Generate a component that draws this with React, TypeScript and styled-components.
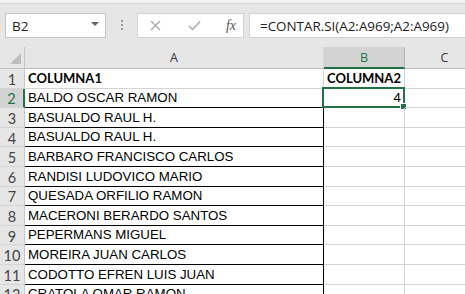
import React from "react";
import styled, { createGlobalStyle } from "styled-components";

const Global = createGlobalStyle`
  html, body { margin: 0; padding: 0; background: #ffffff; }
  body { width: 465px; height: 294px; overflow: hidden; }
  #root { width: 465px; height: 294px; }
`;

const Page = styled.div`
  width: 465px;
  height: 294px;
  display: flex;
  flex-direction: column;
  overflow: hidden;
  background: #e6e6e6;
`;

const TopStrip = styled.div`
  height: 3px;
  background: #f3f3f3;
  border-bottom: 1px solid #d4d4d4;
  flex: none;
`;

const Toolbar = styled.div`
  height: 43px;
  flex: none;
  display: flex;
  align-items: flex-start;
  padding: 9px 0 0 5px;
  box-sizing: border-box;
  background: #e6e6e6;
`;

const NameBox = styled.div`
  width: 101px;
  height: 25px;
  box-sizing: border-box;
  background: #ffffff;
  border: 1px solid #c6c6c6;
  display: flex;
  align-items: center;
  justify-content: space-between;
  padding: 0 6px 0 6px;
  font-family: "Open Sans", "Noto Sans", sans-serif;
  font-size: 13.5px;
  color: #222;
`;

const DropArrow = styled.span`
  width: 0;
  height: 0;
  border-left: 4px solid transparent;
  border-right: 4px solid transparent;
  border-top: 4px solid #666;
  margin-top: -3px;
`;

const Grip = styled.div`
  width: 2px;
  height: 12px;
  margin: 7px 14px 0 15px;
  background-image: linear-gradient(#9a9a9a 50%, transparent 50%);
  background-size: 2px 4px;
`;

const IconBox = styled.div`
  width: 107px;
  height: 25px;
  box-sizing: border-box;
  background: #ffffff;
  border: 1px solid #d2d2d2;
  display: flex;
  align-items: center;
  padding-left: 9px;
`;

const IconSlot = styled.div<{ $w: number }>`
  width: ${(p) => p.$w}px;
  display: flex;
  justify-content: center;
  align-items: center;
`;

const Fx = styled.span`
  font-family: "Liberation Serif", "DejaVu Serif", serif;
  font-style: italic;
  font-size: 14px;
  color: #555;
`;

const FormulaBar = styled.div`
  flex: 1;
  height: 25px;
  margin-left: 5px;
  box-sizing: border-box;
  background: #ffffff;
  border: 1px solid #d2d2d2;
  border-right: none;
  display: flex;
  align-items: center;
  padding-left: 10px;
  font-family: "Open Sans", "Noto Sans", sans-serif;
  font-size: 13.4px;
  color: #222;
  white-space: nowrap;
`;

const Sheet = styled.div`
  flex: 1;
  display: grid;
  grid-template-columns: 25px 299px 81px 80px;
  grid-template-rows: 22px repeat(12, 19.6px);
  background: #ffffff;
  overflow: hidden;
`;

const Corner = styled.div`
  background: #e6e6e6;
  border-right: 1px solid #c8c8c8;
  border-bottom: 1px solid #bdbdbd;
  position: relative;
  box-sizing: border-box;
  &::after {
    content: "";
    position: absolute;
    right: 3px;
    bottom: 4px;
    width: 0;
    height: 0;
    border-left: 11px solid transparent;
    border-bottom: 11px solid #bdbdbd;
  }
`;

const ColHead = styled.div<{ $active?: boolean }>`
  background: ${(p) => (p.$active ? "#d3d3d3" : "#e6e6e6")};
  border-right: 1px solid ${(p) => (p.$active ? "#b3b3b3" : "#d4d4d4")};
  border-bottom: ${(p) => (p.$active ? "2px solid #217346" : "1px solid #bdbdbd")};
  box-sizing: border-box;
  display: flex;
  align-items: center;
  justify-content: center;
  font-family: "Open Sans", "Noto Sans", sans-serif;
  font-size: 12.5px;
  color: ${(p) => (p.$active ? "#217346" : "#333")};
  padding-top: ${(p) => (p.$active ? "1px" : "0")};
`;

const RowHead = styled.div<{ $active?: boolean }>`
  background: ${(p) => (p.$active ? "#d3d3d3" : "#e6e6e6")};
  border-right: ${(p) => (p.$active ? "2px solid #217346" : "1px solid #c8c8c8")};
  border-bottom: 1px solid #d4d4d4;
  box-sizing: border-box;
  display: flex;
  align-items: center;
  justify-content: center;
  font-family: Lato, "Liberation Sans", sans-serif;
  font-size: 14.5px;
  color: ${(p) => (p.$active ? "#217346" : "#444")};
  padding-top: 2px;
`;

const Cell = styled.div<{ $boxRight?: boolean; $boxBottom?: boolean; $bold?: boolean; $num?: boolean }>`
  position: relative;
  box-sizing: border-box;
  border-right: 1px solid ${(p) => (p.$boxRight ? "#000" : "#d4d4d4")};
  border-bottom: 1px solid ${(p) => (p.$boxBottom ? "#000" : "#d4d4d4")};
  display: flex;
  align-items: flex-end;
  justify-content: ${(p) => (p.$num ? "flex-end" : "flex-start")};
  padding: 0 3px 1px 3px;
  white-space: nowrap;
  overflow: visible;
  font-family: ${(p) => (p.$bold ? 'Lato, "Liberation Sans", sans-serif' : '"Liberation Sans", Arial, sans-serif')};
  font-weight: ${(p) => (p.$bold ? 700 : 400)};
  font-size: ${(p) => (p.$bold ? "13px" : "13.3px")};
  line-height: 17px;
  color: #000;
`;

const Selection = styled.div`
  position: absolute;
  left: -2px;
  top: -2px;
  right: -1px;
  bottom: -1px;
  border: 2px solid #217346;
  pointer-events: none;
`;

const Handle = styled.div`
  position: absolute;
  right: -4px;
  bottom: -4px;
  width: 5px;
  height: 5px;
  background: #217346;
  border: 1px solid #ffffff;
`;

const names = [
  "BALDO OSCAR RAMON",
  "BASUALDO RAUL H.",
  "BASUALDO RAUL H.",
  "BARBARO FRANCISCO CARLOS",
  "RANDISI LUDOVICO MARIO",
  "QUESADA ORFILIO RAMON",
  "MACERONI BERARDO SANTOS",
  "PEPERMANS MIGUEL",
  "MOREIRA JUAN CARLOS",
  "CODOTTO EFREN LUIS JUAN",
  "CRATOLA OMAR RAMON",
];

const XIcon = () => (
  <svg width="11" height="11" viewBox="0 0 11 11">
    <path d="M1 1 L10 10 M10 1 L1 10" stroke="#a8a8a8" strokeWidth="1.3" fill="none" />
  </svg>
);

const CheckIcon = () => (
  <svg width="13" height="11" viewBox="0 0 13 11">
    <path d="M1 6 L4.5 9.5 L12 1.5" stroke="#a8a8a8" strokeWidth="1.5" fill="none" />
  </svg>
);

export default function App() {
  return (
    <>
      <Global />
      <Page>
        <TopStrip />
        <Toolbar>
          <NameBox>
            <span>B2</span>
            <DropArrow />
          </NameBox>
          <Grip />
          <IconBox>
            <IconSlot $w={17}><XIcon /></IconSlot>
            <IconSlot $w={60}><CheckIcon /></IconSlot>
            <IconSlot $w={14}><Fx>fx</Fx></IconSlot>
          </IconBox>
          <FormulaBar>=CONTAR.SI(A2:A969;A2:A969)</FormulaBar>
        </Toolbar>
        <Sheet>
          <Corner />
          <ColHead>A</ColHead>
          <ColHead $active>B</ColHead>
          <ColHead>C</ColHead>

          <RowHead>1</RowHead>
          <Cell $bold>COLUMNA1</Cell>
          <Cell $bold>COLUMNA2</Cell>
          <Cell />

          {names.map((n, i) => {
            const row = i + 2;
            const active = row === 2;
            return (
              <React.Fragment key={row}>
                <RowHead $active={active}>{row}</RowHead>
                <Cell $boxBottom $boxRight={row > 2}>{n}</Cell>
                {active ? (
                  <Cell $num>
                    4
                    <Selection>
                      <Handle />
                    </Selection>
                  </Cell>
                ) : (
                  <Cell />
                )}
                <Cell />
              </React.Fragment>
            );
          })}
        </Sheet>
      </Page>
    </>
  );
}
